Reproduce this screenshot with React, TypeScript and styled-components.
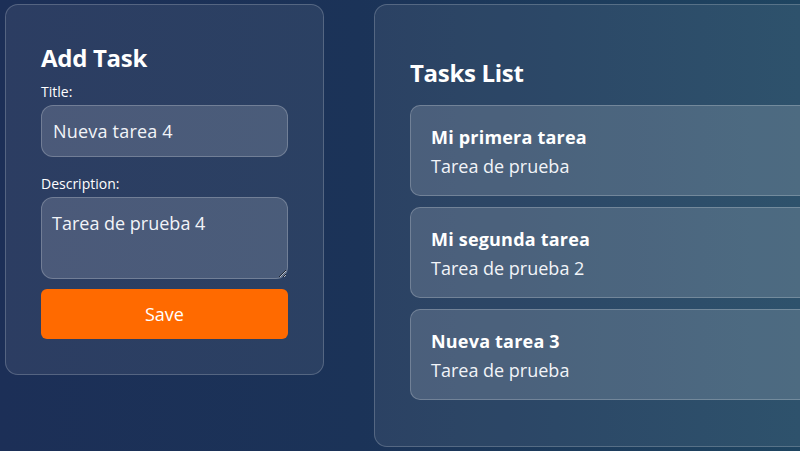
import React from "react";
import styled, { createGlobalStyle } from "styled-components";

const FONT = `"Open Sans", "Noto Sans", sans-serif`;

const GlobalStyle = createGlobalStyle`
  html, body {
    margin: 0;
    padding: 0;
    height: 100%;
    overflow: hidden;
  }
  body {
    background: linear-gradient(90deg, #1c2f57 0%, #1b3358 45%, #1f4561 100%);
    font-family: ${FONT};
    color: #ffffff;
  }
  * { box-sizing: border-box; }
`;

const Page = styled.div`
  display: flex;
  align-items: flex-start;
  gap: 50px;
  padding: 4px 0 0 5px;
  width: 1100px;
`;

const Panel = styled.section<{ $wide?: boolean }>`
  flex: none;
  width: ${(p) => (p.$wide ? "560px" : "319px")};
  height: ${(p) => (p.$wide ? "443px" : "auto")};
  background: rgba(255, 255, 255, 0.07);
  border: 1px solid rgba(255, 255, 255, 0.2);
  border-radius: 13px;
  padding: ${(p) => (p.$wide ? "53px 35px 45px" : "38px 35px 35px")};
  display: flex;
  flex-direction: column;
`;

const Heading = styled.h2<{ $gap: number }>`
  margin: 0 0 ${(p) => p.$gap}px;
  font-size: 24px;
  line-height: 30px;
  font-weight: 700;
  letter-spacing: -0.3px;
  color: #ffffff;
`;

const Label = styled.label`
  display: block;
  font-size: 14px;
  line-height: 18px;
  margin-bottom: 4px;
  color: #ffffff;
`;

const fieldBase = `
  display: block;
  width: 100%;
  background: rgba(255, 255, 255, 0.15);
  border: 1px solid rgba(255, 255, 255, 0.22);
  border-radius: 12px;
  color: #f2f4f8;
  font-family: ${FONT};
  font-size: 18px;
  outline: none;
`;

const TextInput = styled.input`
  ${fieldBase}
  height: 52px;
  padding: 0 11px;
  margin-bottom: 18px;
  letter-spacing: 0.2px;
`;

const TextArea = styled.textarea`
  ${fieldBase}
  height: 82px;
  padding: 13px 10px;
  line-height: normal;
  resize: vertical;
  margin-bottom: 10px;
`;

const SaveButton = styled.button`
  display: block;
  width: 100%;
  height: 50px;
  border: none;
  border-radius: 6px;
  background: #ff6a00;
  color: #ffffff;
  font-family: ${FONT};
  font-size: 18px;
  cursor: pointer;
`;

const TaskList = styled.div`
  display: flex;
  flex-direction: column;
  gap: 11px;
`;

const TaskCard = styled.div`
  background: rgba(255, 255, 255, 0.15);
  border: 1px solid rgba(255, 255, 255, 0.22);
  border-radius: 10px;
  padding: 20px 20px 18px;
  height: 91px;
`;

const TaskTitle = styled.div`
  font-size: 18px;
  line-height: 22px;
  font-weight: 700;
  letter-spacing: 0.2px;
  margin-bottom: 7px;
  color: #ffffff;
`;

const TaskDesc = styled.div`
  font-size: 18px;
  line-height: 22px;
  color: #f2f4f8;
`;

const tasks = [
  { title: "Mi primera tarea", description: "Tarea de prueba" },
  { title: "Mi segunda tarea", description: "Tarea de prueba 2" },
  { title: "Nueva tarea 3", description: "Tarea de prueba" },
];

export default function App() {
  return (
    <>
      <GlobalStyle />
      <Page>
        <Panel>
          <Heading $gap={10}>Add Task</Heading>
          <Label htmlFor="title">Title:</Label>
          <TextInput id="title" defaultValue="Nueva tarea 4" />
          <Label htmlFor="desc">Description:</Label>
          <TextArea id="desc" defaultValue="Tarea de prueba 4" />
          <SaveButton type="button">Save</SaveButton>
        </Panel>
        <Panel $wide>
          <Heading $gap={17}>Tasks List</Heading>
          <TaskList>
            {tasks.map((t) => (
              <TaskCard key={t.title}>
                <TaskTitle>{t.title}</TaskTitle>
                <TaskDesc>{t.description}</TaskDesc>
              </TaskCard>
            ))}
          </TaskList>
        </Panel>
      </Page>
    </>
  );
}
